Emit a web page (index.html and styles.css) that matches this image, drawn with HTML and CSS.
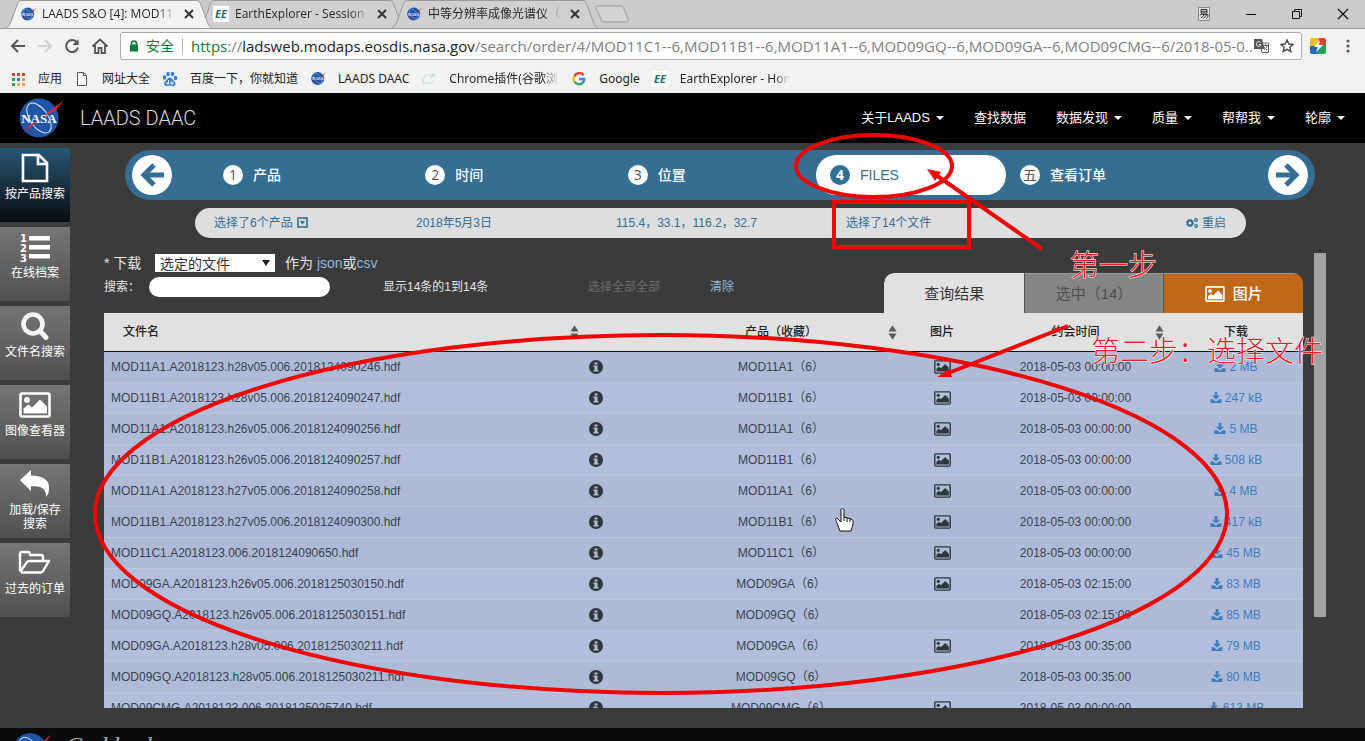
FILE: index.html
```html
<!DOCTYPE html>
<html lang="zh-CN">
<head>
<meta charset="utf-8">
<title>LAADS DAAC</title>
<link rel="stylesheet" href="styles.css">
</head>
<body>
<svg class="defs" width="0" height="0" aria-hidden="true">
  <symbol id="nasa" viewBox="0 0 48 42">
    <circle cx="23" cy="21" r="19.500" fill="#1f56a5"/>
    <ellipse cx="23" cy="21" rx="9" ry="17" fill="none" stroke="#dfe8f5" stroke-width="1" transform="rotate(-35 23 21)"/>
    <path d="M4 34L15 27.500 24 21.500 48 3l-8 10-15 8L6 38l8-9z" fill="#d8283c"/>
    <text x="23" y="26" text-anchor="middle" font-family="Liberation Serif, serif" font-weight="bold" font-size="13" fill="#fff">NASA</text>
  </symbol>
  <symbol id="picture" viewBox="0 0 32 26">
    <rect x="1.500" y="1.500" width="29" height="23" rx="1.500" fill="none" stroke="currentColor" stroke-width="2.600"/>
    <circle cx="8" cy="8" r="3" fill="currentColor"/>
    <path d="M4.500 21.500v-5l5-4 3.500 3 8-8 7 7v7z" fill="currentColor"/>
  </symbol>
  <symbol id="info" viewBox="0 0 14 14">
    <circle cx="7" cy="7" r="7" fill="currentColor"/>
    <path d="M5.500 2.500h3v2h-3zM4.500 5.500h4v4.500h1v1.500h-5V10h1V7h-1z" fill="#b0bcd8"/>
  </symbol>
  <symbol id="download" viewBox="0 0 12 12">
    <path d="M4.500 0h3v4h3L6 8.300 1.500 4h3zM0 8h3l3 2.500L9 8h3v4H0z" fill="currentColor"/>
  </symbol>
  <symbol id="sort" viewBox="0 0 10 16"><path d="M5 0l4.500 7h-9zM.5 9h9L5 16z" fill="#5d5d5d"/></symbol>
  <symbol id="close" viewBox="0 0 10 10"><path d="M1 1l8 8M9 1L1 9" stroke="#333" stroke-width="2"/></symbol>
  <symbol id="tab" viewBox="0 0 208 29" preserveAspectRatio="none">
    <path d="M0 28.500C4 27 5 24 7 19L12 5C13 2 14 .5 17 .5H191c3 0 4 1.500 5 4.500l6 16c1 4 2 6 6 7.500z" fill="currentColor" stroke="#999"/>
  </symbol>
  <symbol id="ee" viewBox="0 0 16 16">
    <rect width="16" height="16" fill="#fff"/>
    <text x="8" y="12" text-anchor="middle" font-family="Open Sans, sans-serif" font-style="italic" font-weight="bold" font-size="11" fill="#1c6b6b">EE</text>
  </symbol>
</svg>

<div class="tabstrip">
  <button class="tab active"><svg class="tab-shape"><use href="#tab"/></svg><svg class="fav"><use href="#nasa"/></svg><span class="tab-title">LAADS S&amp;O [4]: MOD11</span><svg class="tab-close"><use href="#close"/></svg></button>
  <button class="tab"><svg class="tab-shape"><use href="#tab"/></svg><svg class="fav"><use href="#ee"/></svg><span class="tab-title">EarthExplorer - Session</span><svg class="tab-close"><use href="#close"/></svg></button>
  <button class="tab"><svg class="tab-shape"><use href="#tab"/></svg><svg class="fav"><use href="#nasa"/></svg><span class="tab-title">中等分辨率成像光谱仪（</span><svg class="tab-close"><use href="#close"/></svg></button>
  <button class="new-tab" aria-label="新标签页"><svg width="36" height="18" viewBox="0 0 36 18"><path d="M3.500 1H26c2 0 3 1 4 3l4 10c1 2 0 3-2 3H11c-2 0-3-1-4-3L2 3C1.500 2 2 1 3.500 1z" fill="#d3d3d3" stroke="#999"/></svg></button>
  <div class="window-buttons">
    <button aria-label="输入法"><svg width="14" height="14" viewBox="0 0 14 14"><path d="M1.500.5h11v13h-11z" fill="#e4e4e4" stroke="#888"/><path d="M4 2.500h6v3.500H4zM4 4.300h6M5 6L3 8.500M4.500 7.500h6.500c0 2.500-.5 4-2 4M7 8l-3 3M9.500 8l-3 3.500" fill="none" stroke="#333"/></svg></button>
    <button aria-label="最小化"><svg width="12" height="12" viewBox="0 0 12 12"><path d="M1 6.500h10" stroke="#111"/></svg></button>
    <button aria-label="还原"><svg width="12" height="12" viewBox="0 0 12 12"><path d="M1.500 3.500h7v7h-7zM3.500 3V1.500h7v7H9" fill="none" stroke="#111"/></svg></button>
    <button aria-label="关闭"><svg width="12" height="12" viewBox="0 0 12 12"><path d="M1 1l10 10M11 1L1 11" stroke="#111" stroke-width="1.200"/></svg></button>
  </div>
</div>

<div class="toolbar">
  <button aria-label="后退"><svg width="16" height="16" viewBox="0 0 16 16"><path d="M8 2L2 8l6 6M2 8h13" fill="none" stroke="#555" stroke-width="2"/></svg></button>
  <button aria-label="前进"><svg width="16" height="16" viewBox="0 0 16 16"><path d="M8 2l6 6-6 6M14 8H1" fill="none" stroke="#d2d2d2" stroke-width="2"/></svg></button>
  <button aria-label="刷新"><svg width="16" height="16" viewBox="0 0 16 16"><path d="M13 4.500A6 6 0 1 0 14 9.500" fill="none" stroke="#555" stroke-width="2"/><path d="M14.500 1v6h-6z" fill="#555"/></svg></button>
  <button aria-label="主页"><svg width="18" height="16" viewBox="0 0 18 16"><path d="M1.500 8.500L9 1.500l7.500 7M4 7v8h3.500v-5h3v5H14V7" fill="none" stroke="#555" stroke-width="1.800"/></svg></button>
  <div class="omnibox">
    <svg width="10" height="12" viewBox="0 0 10 12"><path d="M2.500 5V3.500a2.500 2.500 0 0 1 5 0V5" fill="none" stroke="#0b7d3b" stroke-width="1.600"/><rect x="1" y="4.500" width="8" height="7" fill="#0b7d3b"/></svg>
    <span class="secure">安全</span>
    <span class="url"><span class="scheme">https</span>://<span class="host">ladsweb.modaps.eosdis.nasa.gov</span>/search/order/4/MOD11C1--6,MOD11B1--6,MOD11A1--6,MOD09GQ--6,MOD09GA--6,MOD09CMG--6/2018-05-0...</span>
    <svg width="15" height="14" viewBox="0 0 15 14"><path d="M6 4h8.500v9.500H8z" fill="#fff" stroke="#666"/><path d="M0 0h8l2.500 10H0z" fill="#555"/><path d="M6.500 3.500a2.300 2.300 0 1 0 .5 2H4.800" fill="none" stroke="#fff"/><path d="M9 6.500h5M11.500 5v1.500M13 7c-.5 2-2 3-3 4M10 8l3 3" stroke="#666" fill="none"/></svg>
    <svg width="14" height="14" viewBox="0 0 14 14"><path d="M7 1l1.800 4 4.200.4-3.200 2.900 1 4.200L7 10.300 3.200 12.500l1-4.200L1 5.400 5.200 5z" fill="none" stroke="#444" stroke-width="1.400"/></svg>
  </div>
  <button aria-label="扩展"><svg width="16" height="16" viewBox="0 0 16 16"><path d="M2 0h7L5 9H0V2c0-1 1-2 2-2z" fill="#f6bc26"/><path d="M9 0h5c1 0 2 1 2 2v6H7z" fill="#dc4437"/><path d="M16 7v7c0 1-1 2-2 2H6l2-8z" fill="#22a258"/><path d="M0 8h8l-1 8H2c-1 0-2-1-2-2z" fill="#2766bd"/><path d="M10 2L4 9h4l-2 5 7-7H9z" fill="#fff"/></svg></button>
  <button class="menu" aria-label="菜单"><svg width="4" height="16" viewBox="0 0 4 16"><g fill="#555"><circle cx="2" cy="3" r="1.600"/><circle cx="2" cy="8" r="1.600"/><circle cx="2" cy="13" r="1.600"/></g></svg></button>
</div>

<div class="bookmarks">
  <a href="#"><svg viewBox="0 0 16 16"><path d="M2 2h3v3H2zM7 2h3v3H7zM12 2h3v3h-3z" fill="#d9453d"/><path d="M2 7h3v3H2z" fill="#2ba24c"/><path d="M7 7h3v3H7z" fill="#3c78d8"/><path d="M12 7h3v3h-3z" fill="#e8a33a"/><path d="M2 12h3v3H2z" fill="#2ba24c"/><path d="M7 12h3v3H7zM12 12h3v3h-3z" fill="#e8a33a"/></svg><span>应用</span></a>
  <a href="#"><svg viewBox="0 0 16 16"><path d="M3.500 1.500h6l3 3v10h-9zM9.500 1.500v3h3" fill="#fff" stroke="#555"/></svg><span>网址大全</span></a>
  <a href="#"><svg viewBox="0 0 16 16"><g fill="#3a7de0"><ellipse cx="2.500" cy="6.500" rx="1.800" ry="2.300"/><ellipse cx="6" cy="3" rx="1.800" ry="2.300"/><ellipse cx="10.500" cy="3" rx="1.800" ry="2.300"/><ellipse cx="13.500" cy="7" rx="1.800" ry="2.300"/><path d="M8 6.500c2 0 3 2.500 4.500 4s1.500 4-1 4.500-2.500-.5-3.500-.5-2 .8-4 .5-2.500-3-1-4.500 3-4 5-4z"/></g><path d="M6.500 9v4H5v-2M9 10.500V13h2v-2.500" fill="none" stroke="#fff"/></svg><span>百度一下，你就知道</span></a>
  <a href="#"><svg viewBox="0 0 16 16"><use href="#nasa" width="16" height="15"/></svg><span>LAADS DAAC</span></a>
  <a href="#"><svg viewBox="0 0 16 16"><path d="M10 4H5L2 8v4h9l2-3M9 7l4-4M10 3h3v3" fill="none" stroke="#bfe0cf" stroke-width="1.200"/></svg><span class="clipped">Chrome插件(谷歌浏览器</span></a>
  <a href="#"><svg viewBox="0 0 16 16" fill="none" stroke-width="2.400"><path d="M12.500 4.200A5.200 5.200 0 0 0 3.400 5.500" stroke="#ea4335"/><path d="M3.400 5.500a5.200 5.200 0 0 0 0 5" stroke="#fbbc05"/><path d="M3.400 10.500a5.200 5.200 0 0 0 8 1.500" stroke="#34a853"/><path d="M8 8h5.200c0 1.600-.6 3-1.800 4" stroke="#4285f4"/></svg><span>Google</span></a>
  <a href="#"><svg viewBox="0 0 16 16"><use href="#ee" width="16" height="16"/></svg><span class="clipped">EarthExplorer - Home</span></a>
</div>

<header class="site-header">
  <a class="brand" href="#"><svg width="48" height="42"><use href="#nasa"/></svg><span>LAADS DAAC</span></a>
  <nav>
    <a class="drop" href="#">关于LAADS</a><a href="#">查找数据</a><a class="drop" href="#">数据发现</a><a class="drop" href="#">质量</a><a class="drop" href="#">帮帮我</a><a class="drop" href="#">轮廓</a>
  </nav>
</header>

<main>
  <aside>
    <button class="side current"><svg width="28" height="30" viewBox="0 0 28 30"><path d="M2 2h16l8 8v18H2zM17 2v9h9" fill="none" stroke="#fff" stroke-width="2.600"/></svg>按产品搜索</button>
    <button class="side"><svg width="32" height="30" viewBox="0 0 32 30"><path d="M10 4h21v4.500H10zM10 13h21v4.500H10zM10 22h21v4.500H10z" fill="#fff"/><g font-family="DejaVu Sans, sans-serif" font-weight="bold" font-size="10" fill="#fff"><text x="1" y="10">1</text><text x="1" y="20">2</text><text x="1" y="30">3</text></g></svg>在线档案</button>
    <button class="side"><svg width="28" height="30" viewBox="0 0 28 30"><circle cx="12" cy="13" r="9.500" fill="none" stroke="#f4f4f4" stroke-width="4.600"/><path d="M19 20l6 6.500" stroke="#f4f4f4" stroke-width="5" stroke-linecap="round"/></svg>文件名搜索</button>
    <button class="side"><svg width="32" height="30" viewBox="0 -2 32 30"><use href="#picture" width="32" height="26"/></svg>图像查看器</button>
    <button class="side"><svg width="32" height="30" viewBox="0 0 32 30"><path d="M1 11L12 1v5.500c12 0 19 5 18 13.500 0 3-1 6-3 8 .5-8-4-11-15-11V22z" fill="#fff"/></svg>加载/保存<br>搜索</button>
    <button class="side"><svg width="34" height="30" viewBox="0 0 34 30"><path d="M2 23V6c0-1.500.5-2 2-2h6c1.500 0 2 .5 2 3h11c1.500 0 2 .5 2 2v4M2 24l7-10c.5-.8 1-1 2-1h20l-6 10c-.6 1-1 1.500-2 1.500H3" fill="none" stroke="#fff" stroke-width="2.400" stroke-linejoin="round"/></svg>过去的订单</button>
  </aside>

  <section class="content">
    <div class="steps">
      <button class="arrow" aria-label="上一步"><svg width="26" height="26" viewBox="0 0 26 26"><path d="M15 3L5 13l10 10M6 13h19" fill="none" stroke="#356d93" stroke-width="5"/></svg></button>
      <ol>
        <li><b>1</b>产品</li>
        <li><b>2</b>时间</li>
        <li><b>3</b>位置</li>
        <li class="on"><b>4</b>FILES</li>
        <li><b>五</b>查看订单</li>
      </ol>
      <button class="arrow" aria-label="下一步"><svg width="26" height="26" viewBox="0 0 26 26"><path d="M11 3l10 10-10 10M20 13H1" fill="none" stroke="#356d93" stroke-width="5"/></svg></button>
    </div>
    <div class="summary">
      <a href="#">选择了6个产品<svg width="11" height="11" viewBox="0 0 11 11"><rect x="1" y="1" width="9" height="9" fill="none" stroke="currentColor" stroke-width="1.600"/><path d="M3 4h5L5.500 7.500z" fill="currentColor"/></svg></a>
      <a href="#">2018年5月3日</a>
      <a href="#">115.4，33.1，116.2，32.7</a>
      <a href="#">选择了14个文件</a>
      <a href="#"><svg class="cogs" width="12" height="12" viewBox="0 0 12 12" fill="none" stroke="currentColor"><circle cx="4" cy="6" r="2.500" stroke-width="1.800"/><circle cx="4" cy="6" r="3.600" stroke-dasharray="1.400 1.400"/><circle cx="10" cy="3" r="1.300" stroke-width="1.200"/><circle cx="10" cy="9" r="1.300" stroke-width="1.200"/></svg>重启</a>
    </div>

    <div class="scroll-area">
      <div class="results">
        <div class="tools">
          <div class="filters">
            <div class="filter-row">
              <label for="dl">* 下载</label>
              <span class="select-wrap"><select id="dl"><option>选定的文件</option></select></span>
              <span>作为 <a href="#">json</a>或<a href="#">csv</a></span>
            </div>
            <div class="filter-row second">
              <label for="q">搜索：</label>
              <input id="q" type="text">
              <span class="status">显示14条的1到14条</span>
              <button class="select-all" disabled>选择全部全部</button>
              <button class="clear">清除</button>
            </div>
          </div>
          <div class="result-tabs">
            <button class="r-tab first">查询结果</button>
            <button class="r-tab">选中（14）</button>
            <button class="r-tab images"><svg width="20" height="16"><use href="#picture"/></svg>图片</button>
          </div>
        </div>
        <table>
          <colgroup><col><col class="c-info"><col class="c-prod"><col class="c-img"><col class="c-time"><col class="c-dl"></colgroup>
          <thead><tr><th class="name">文件名<svg class="sort"><use href="#sort"/></svg></th><th></th><th class="prod">产品（收藏）<svg class="sort"><use href="#sort"/></svg></th><th>图片</th><th>约会时间<svg class="sort"><use href="#sort"/></svg></th><th>下载</th></tr></thead>
          <tbody id="rows"></tbody>
        </table>
      </div>
      <div class="scrollbar"><div class="thumb"></div></div>
    </div>
  </section>
</main>

<footer><svg width="42" height="36"><use href="#nasa"/></svg><span>Goddard</span></footer>

<svg class="marks" width="1365" height="741" viewBox="0 0 1365 741" fill="none" stroke="#f00505" stroke-width="4">
  <ellipse cx="874" cy="166" rx="78" ry="31"/>
  <rect x="834" y="202" width="135" height="45"/>
  <path d="M1042 249L936 175"/>
  <path d="M927 169l14 3-6 9z" fill="#f00505" stroke="none"/>
  <ellipse cx="661" cy="514" rx="566" ry="179"/>
  <path d="M1068 326L946 374"/>
  <path d="M937 377l12-8 3 8z" fill="#f00505" stroke="none"/>
  <g class="mark-text"><text x="1070" y="276">第一步</text><text x="1091" y="362">第二步：选择文件</text></g>
  <path d="M840 531l-3-8c-1-2-2-5 0-5l4 4v-12c0-2 3-2 3 0v7l7 2c2 .5 2.500 2 2 5l-2 7z" fill="#fff" stroke="#111" stroke-width="1"/>
  <path d="M844 517v4M847 518v4M850 519v3" stroke="#111" stroke-width="1"/>
</svg>
<script src="rows.js"></script>
</body>
</html>
```
FILE: rows.js
```js
const files = [
  ["MOD11A1.A2018123.h28v05.006.2018124090246.hdf", "MOD11A1", true, "00:00:00", "2 MB"],
  ["MOD11B1.A2018123.h28v05.006.2018124090247.hdf", "MOD11B1", true, "00:00:00", "247 kB"],
  ["MOD11A1.A2018123.h26v05.006.2018124090256.hdf", "MOD11A1", true, "00:00:00", "5 MB"],
  ["MOD11B1.A2018123.h26v05.006.2018124090257.hdf", "MOD11B1", true, "00:00:00", "508 kB"],
  ["MOD11A1.A2018123.h27v05.006.2018124090258.hdf", "MOD11A1", true, "00:00:00", "4 MB"],
  ["MOD11B1.A2018123.h27v05.006.2018124090300.hdf", "MOD11B1", true, "00:00:00", "417 kB"],
  ["MOD11C1.A2018123.006.2018124090650.hdf", "MOD11C1", true, "00:00:00", "45 MB"],
  ["MOD09GA.A2018123.h26v05.006.2018125030150.hdf", "MOD09GA", true, "02:15:00", "83 MB"],
  ["MOD09GQ.A2018123.h26v05.006.2018125030151.hdf", "MOD09GQ", false, "02:15:00", "85 MB"],
  ["MOD09GA.A2018123.h28v05.006.2018125030211.hdf", "MOD09GA", true, "00:35:00", "79 MB"],
  ["MOD09GQ.A2018123.h28v05.006.2018125030211.hdf", "MOD09GQ", false, "00:35:00", "80 MB"],
  ["MOD09CMG.A2018123.006.2018125025740.hdf", "MOD09CMG", true, "00:00:00", "613 MB"]
];
document.getElementById("rows").innerHTML = files.map(([name, product, image, time, size]) =>
  `<tr><td class="name">${name}</td>
  <td><svg class="info"><use href="#info"/></svg></td>
  <td class="prod">${product}（6）</td>
  <td>${image ? '<svg class="pic"><use href="#picture"/></svg>' : ""}</td>
  <td>2018-05-03 ${time}</td>
  <td><a href="#"><svg class="dl"><use href="#download"/></svg>${size}</a></td></tr>`).join("");
```
FILE: styles.css
```css
* { box-sizing: border-box; }
body {
  margin: 0;
  height: 100vh;
  display: flex;
  flex-direction: column;
  overflow: hidden;
  background: #3b3b3b;
  font: 12px/16px "Liberation Sans", "Noto Sans CJK SC", sans-serif;
  color: #e6e6e6;
}
a { color: inherit; text-decoration: none; }
button { border: 0; padding: 0; background: none; font: inherit; color: inherit; }
svg { flex: none; }
.defs { position: absolute; }

/* browser window */
.tabstrip, .toolbar, .bookmarks {
  display: flex;
  align-items: center;
  flex: none;
  color: #222;
  font-family: "Open Sans", "Noto Sans CJK SC", sans-serif;
}
.tabstrip { height: 29px; background: #cbcbcb; padding-left: 5px; border-bottom: 1px solid #999; }
.tab {
  position: relative;
  width: 193px;
  height: 29px;
  padding: 0 0 0 15px;
  display: flex;
  align-items: center;
  gap: 6px;
  color: #d0d0d0;
}
.tab.active { color: #f2f2f2; z-index: 1; }
.tab-shape { position: absolute; left: 0; top: 0; width: 208px; height: 29px; }
.fav, .tab-title, .tab-close { position: relative; }
.fav { width: 16px; height: 16px; }
.tab-title {
  width: 135px;
  overflow: hidden;
  white-space: nowrap;
  text-align: left;
  background: linear-gradient(90deg, #222 85%, transparent);
  background-clip: text;
  color: transparent;
}
.tab-close { width: 10px; height: 10px; margin-left: 1px; }
.new-tab { margin-left: 10px; height: 18px; }
.window-buttons { margin-left: auto; display: flex; align-items: center; gap: 34px; padding-right: 16px; }
.window-buttons svg { display: block; }
.toolbar { height: 35px; background: #f2f2f2; padding: 2px 15px 3px 10px; gap: 11px; }
.toolbar svg { display: block; }
.menu { margin-left: 9px; }
.omnibox {
  flex: 1;
  min-width: 0;
  height: 28px;
  margin-right: -3px;
  padding: 0 7px 0 8px;
  display: flex;
  align-items: center;
  gap: 11px;
  background: #fff;
  border: 1px solid #aaa;
  border-radius: 3px;
}
.secure { font-size: 14px; color: #0b7d3b; padding-right: 8px; margin-left: -4px; border-right: 1px solid #bbb; }
.url { flex: 1; min-width: 0; margin: 0 -11px 0 -3px; white-space: nowrap; overflow: hidden; font-size: 15px; line-height: 22px; color: #808080; }
.scheme { color: #0b7d3b; }
.host { color: #222; }
.bookmarks { height: 29px; background: #f2f2f2; padding-left: 10px; gap: 12px; font-family: "Noto Sans", "Noto Sans CJK SC", sans-serif; }
.bookmarks a { display: flex; align-items: center; gap: 12px; white-space: nowrap; }
.bookmarks svg { width: 16px; height: 16px; }
.clipped { width: 110px; overflow: hidden; background: linear-gradient(90deg, #222 85%, transparent); background-clip: text; color: transparent; }

/* site header */
.site-header {
  flex: none;
  height: 50px;
  background: #000;
  display: flex;
  align-items: center;
  justify-content: space-between;
  padding: 0 20px 0 16px;
}
.brand { display: flex; align-items: center; gap: 16px; font: 300 20px/30px Roboto, sans-serif; color: #d8d8d8; }
nav { display: flex; gap: 30px; font-size: 13px; color: #fff; }
.drop::after {
  content: "";
  display: inline-block;
  margin-left: 6px;
  vertical-align: 2px;
  border: 4px solid transparent;
  border-top-color: #fff;
  border-bottom: 0;
}

/* body */
main { flex: 1; min-height: 0; display: flex; }
aside { width: 70px; flex: none; padding-top: 5px; display: flex; flex-direction: column; gap: 5px; }
.side {
  height: 74px;
  padding-top: 5px;
  display: flex;
  flex-direction: column;
  align-items: center;
  justify-content: flex-start;
  line-height: 14px;
  color: #fff;
  background: linear-gradient(#757575, #505050);
}
.side svg { display: block; margin-bottom: 4px; }
.side.current { background: linear-gradient(#275675, #0a0c0e); }
.content { flex: 1; min-width: 0; display: flex; flex-direction: column; padding: 7px 39px 20px 34px; }
.steps {
  flex: none;
  height: 50px;
  margin: 0 11px 0 21px;
  padding: 0 7px;
  display: flex;
  align-items: center;
  border-radius: 25px;
  background: #356d93;
}
.arrow { width: 40px; height: 40px; display: grid; place-items: center; border-radius: 50%; background: #fff; flex: none; }
.steps ol {
  flex: 1;
  margin: 0;
  padding: 0 22px 0 37px;
  list-style: none;
  display: grid;
  grid-template-columns: 1fr 1fr 1fr 190px 240px;
}
.steps li { height: 40px; display: flex; align-items: center; gap: 10px; padding-left: 14px; font-size: 14px; font-weight: 500; color: #fff; }
.steps b { width: 20px; height: 20px; border-radius: 50%; background: #fff; color: #555; text-align: center; font: 14px/20px "Open Sans", "Noto Sans CJK SC", sans-serif; }
.steps .on { background: #fff; color: #356d93; border-radius: 20px; font-weight: 400; }
.steps .on b { background: #356d93; color: #fff; font-weight: 700; }
.summary {
  flex: none;
  height: 30px;
  margin: 8px 80px 0 91px;
  padding: 0 20px 0 19px;
  display: grid;
  grid-template-columns: 202px 200px 230px 1fr auto;
  align-items: center;
  border-radius: 15px;
  background: #dedede;
  color: #356d93;
}
.summary svg { margin-left: 4px; vertical-align: -1px; }
.summary .cogs { margin: 0 4px 0 0; vertical-align: -2px; }
.scroll-area { flex: 1; min-height: 0; margin-top: 15px; display: flex; gap: 11px; }
.results { flex: 1; min-width: 0; overflow: hidden; }
.scrollbar { width: 12px; }
.thumb { height: 80%; background: #a3a3a3; }
.tools { height: 60px; display: flex; justify-content: space-between; }
.filter-row { display: flex; align-items: center; height: 20px; font-size: 14px; white-space: nowrap; }
.filter-row a, .clear { color: #8cb8dd; }
.filter-row label[for="dl"] { width: 51px; }
.select-wrap { position: relative; margin-right: 10px; }
.select-wrap::after {
  content: "";
  position: absolute;
  right: 5px;
  top: 6px;
  border: 4px solid transparent;
  border-top: 6px solid #222;
  border-bottom: 0;
}
select {
  appearance: none;
  display: block;
  width: 120px;
  height: 18px;
  padding: 0 5px;
  border: 0;
  border-radius: 0;
  background: #fff;
  color: #333;
  font: 14px/18px "Noto Sans CJK SC", sans-serif;
}
.second { margin-top: 4px; font-size: 12px; }
.second label { width: 45px; }
.second input { width: 181px; height: 20px; border: 0; border-radius: 10px; background: #fff; padding: 0 10px; margin-right: 53px; }
.status { width: 205px; }
.select-all { width: 122px; text-align: left; color: #6b6b6b; }
.result-tabs { display: flex; width: 419px; height: 40px; align-self: flex-end; border-radius: 10px 10px 0 0; overflow: hidden; }
.r-tab { flex: 1; display: flex; align-items: center; justify-content: center; gap: 8px; font-size: 15px; color: #505050; background: #858585; border-top: 1px solid #999; border-left: 1px solid #555; }
.r-tab.first { background: #e1e1e1; color: #333; border-color: #e1e1e1; border-radius: 10px 0 0; }
.r-tab.images { background: #bf6819; color: #fff; font-weight: 500; }

table { width: 100%; table-layout: fixed; border-collapse: collapse; color: #333; }
.c-info { width: 24px; }
.c-prod { width: 294px; }
.c-img { width: 80px; }
.c-time { width: 187px; }
.c-dl { width: 134px; }
th { position: relative; height: 38px; padding: 0; background: #e1e1e1; border-bottom: 1px solid #111; font-weight: 500; color: #222; }
th.name { padding-left: 19px; text-align: left; }
th.prod, td.prod { padding-left: 52px; }
.sort { position: absolute; right: 5px; top: 12px; width: 9px; height: 15px; }
td { height: 31px; padding: 0; text-align: center; border-bottom: 1px solid #bcc6da; color: #3a4252; white-space: nowrap; }
td.name { padding-left: 7px; text-align: left; }
tbody tr { background: #b2bfdc; }
tbody tr:nth-child(odd) { background: #aebbd7; }
tbody tr:nth-child(6) { background: #adb7d5; }
td a { color: #3f7dbb; }
td svg { vertical-align: middle; color: #30363d; }
.info { width: 14px; height: 14px; }
.pic { width: 17px; height: 14px; }
td .dl { width: 12px; height: 11px; margin-right: 3px; color: #3f7dbb; vertical-align: -1px; }

footer { flex: none; height: 13px; overflow: hidden; display: flex; align-items: flex-start; gap: 14px; padding: 4px 0 0 10px; background: #0a0a0a; }
footer span { font: italic 24px/26px "Liberation Serif", serif; color: #aaa; }

/* hand-drawn notes */
.marks { position: absolute; left: 0; top: 0; z-index: 5; pointer-events: none; }
.mark-text { font: 300 29px "Noto Sans CJK SC", sans-serif; fill: #e8202c; stroke: #fff; stroke-width: 1px; paint-order: stroke; }
```
